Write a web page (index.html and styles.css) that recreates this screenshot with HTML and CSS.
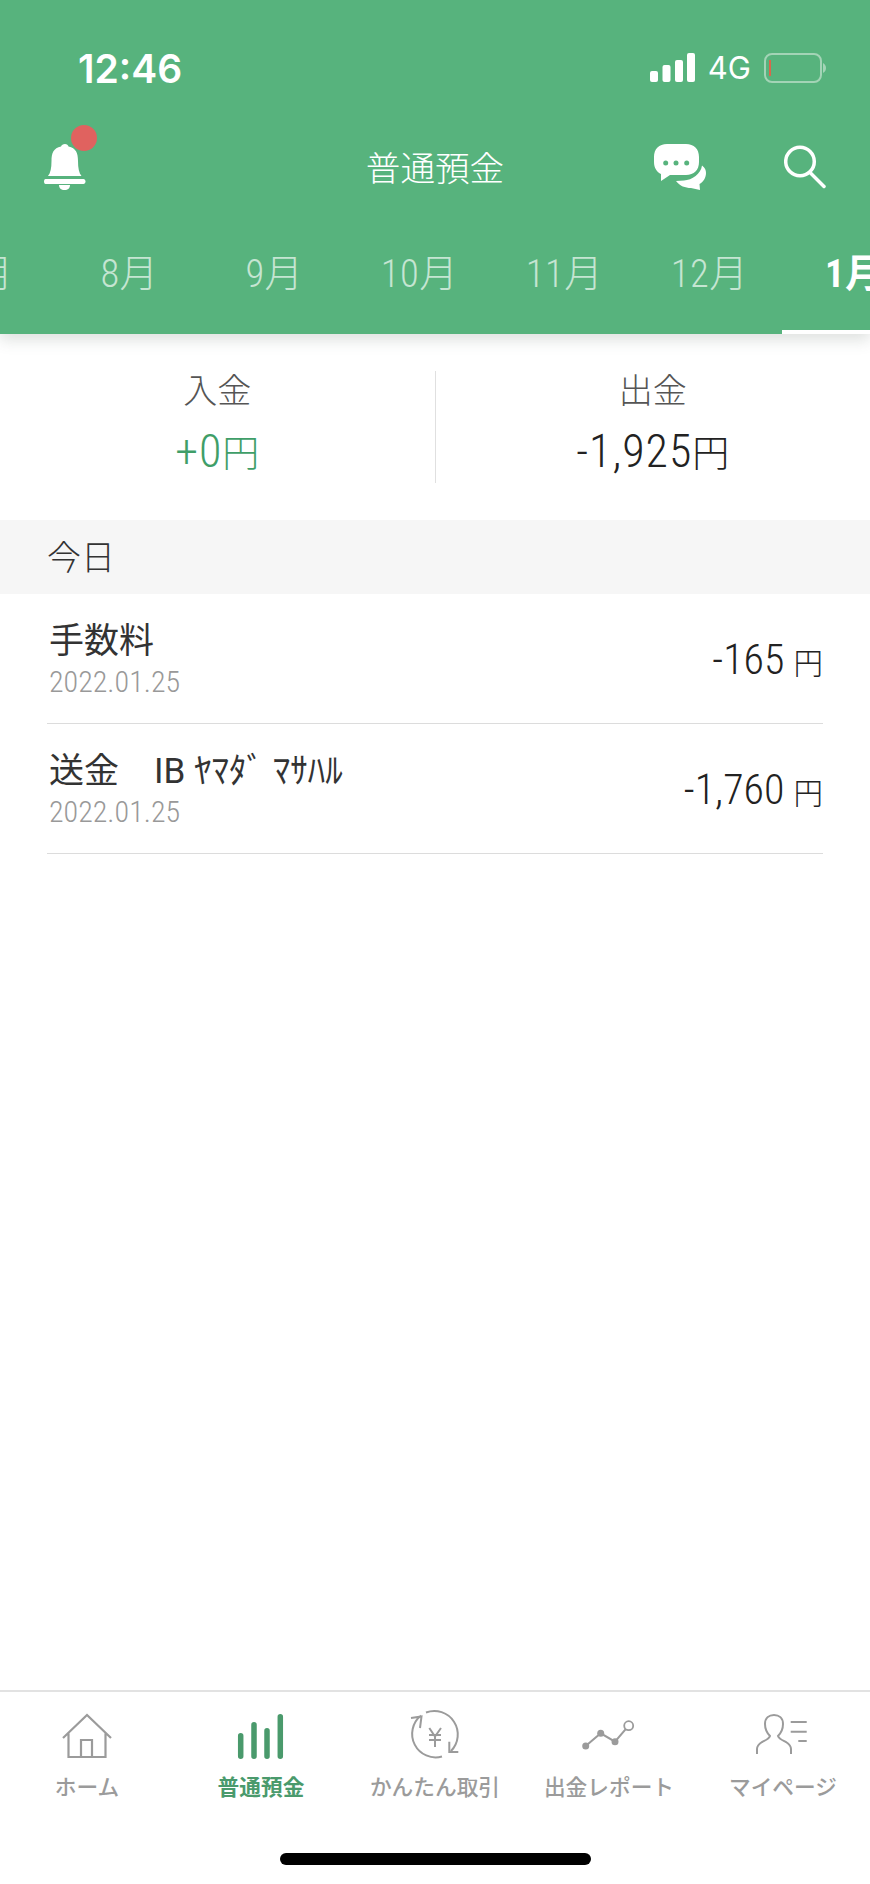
FILE: index.html
```html
<!DOCTYPE html>
<html lang="ja">
<head>
<meta charset="utf-8">
<title>普通預金</title>
<link rel="stylesheet" href="styles.css">
</head>
<body>
<div class="screen">
  <header class="header">
    <div class="status">
      <span class="time">12:46</span>
      <div class="status-right">
        <svg width="45" height="30" viewBox="0 0 45 30"><g fill="#fff"><rect x="0" y="18" width="8" height="11" rx="2"/><rect x="12.500" y="12" width="8" height="17" rx="2"/><rect x="25" y="7" width="8" height="22" rx="2"/><rect x="37" y="0" width="8" height="29" rx="2"/></g></svg>
        <span class="net">4G</span>
        <svg width="63" height="30" viewBox="0 0 63 30"><rect x="1" y="1" width="56" height="28" rx="7" fill="none" stroke="#a3d4b6" stroke-width="2"/><rect x="5" y="7" width="2" height="16" fill="#d8684c"/><path d="M59 10c2 1 3 3 3 5s-1 4-3 5z" fill="#a3d4b6"/></svg>
      </div>
    </div>
    <div class="navbar">
      <div class="bell-wrap">
        <svg width="42" height="47" viewBox="0 0 42 47"><path fill="#fff" d="M21 0c2 0 3 1 3.500 2.500C32 4 34 9 34 17c0 7 1 12 3.500 15H4c2.500-3 3.500-8 3.500-15 0-8 2-13 9.500-14.500C17.500 1 19 0 21 0z"/><path fill="#fff" d="M1.500 35h38c1 0 2 1 2 2.500s-1 2.500-2 2.500h-38C.5 40 0 39 0 37.500S.5 35 1.500 35z"/><path fill="#fff" d="M15 41h11c0 3-2 5-5.500 5S15 44 15 41z"/></svg>
        <span class="dot"></span>
      </div>
      <h1 class="title">普通預金</h1>
      <div class="nav-actions">
        <svg width="52" height="46" viewBox="0 0 52 46"><path fill="#fff" d="M13 0h19c8 0 13 5 13 13v5c0 8-5 13-13 13H16l-9 6 0-7C3 28 0 24 0 18v-5C0 5 5 0 13 0z"/><path fill="#fff" d="M22 37C26 42 31 44 37 44L46 46 45.500 40C49 38 52 34 52 29 52 26 51 24 48 21.500 47 30 38 36 30 36.500Z"/><circle cx="11.700" cy="19" r="2.500" fill="#57b37d"/><circle cx="22" cy="19" r="2.500" fill="#57b37d"/><circle cx="32.700" cy="19" r="2.500" fill="#57b37d"/></svg>
        <svg width="42" height="44" viewBox="0 0 42 44"><circle cx="16" cy="16.500" r="14.300" fill="none" stroke="#fff" stroke-width="3.500"/><path d="M26 27.500 40 41.500" fill="none" stroke="#fff" stroke-width="3.500" stroke-linecap="round"/></svg>
      </div>
    </div>
    <nav class="months">
      <span class="month">7月</span>
      <span class="month">8月</span>
      <span class="month">9月</span>
      <span class="month">10月</span>
      <span class="month">11月</span>
      <span class="month">12月</span>
      <span class="month active">1月</span>
    </nav>
  </header>

  <section class="summary">
    <div class="sum-col">
      <div class="sum-label">入金</div>
      <div class="sum-value plus">+0<span class="yen">円</span></div>
    </div>
    <div class="sum-col">
      <div class="sum-label">出金</div>
      <div class="sum-value">-1,925<span class="yen">円</span></div>
    </div>
  </section>

  <div class="section-head">今日</div>

  <ul class="list">
    <li class="row">
      <div class="row-main">
        <div class="row-title">手数料</div>
        <div class="row-date">2022.01.25</div>
      </div>
      <div class="row-amount">-165<span class="row-yen">円</span></div>
    </li>
    <li class="row">
      <div class="row-main">
        <div class="row-title">送金　IB ﾔﾏﾀﾞ ﾏｻﾊﾙ</div>
        <div class="row-date">2022.01.25</div>
      </div>
      <div class="row-amount">-1,760<span class="row-yen">円</span></div>
    </li>
  </ul>

  <footer class="tabbar">
    <div class="tabs">
      <div class="tab">
        <svg width="50" height="46" viewBox="0 0 50 46"><path d="M1 25 25 2l24 23M6.500 20.500V44h37V20.500M19 44V27h11v17" fill="none" stroke="#9b9b9b" stroke-width="2.200"/></svg>
        <span>ホーム</span>
      </div>
      <div class="tab on">
        <svg width="50" height="46" viewBox="0 0 50 46"><g stroke="#4a9a6c" stroke-width="5.500" stroke-linecap="round"><path d="M4.700 22.750v20.500M18 11.750v31.500M31 17.750v25.500M44.300 3.750v39.500"/></g></svg>
        <span>普通預金</span>
      </div>
      <div class="tab">
        <svg width="50" height="46" viewBox="0 3 50 46"><g fill="none" stroke="#9b9b9b" stroke-width="2"><path d="M32 46.500A23.500 23.500 0 0 1 11 5.500M1 8l10.500-1.500L10 18"/><path d="M16 2.500A23.500 23.500 0 0 1 41 41M39.300 31.700V42h9"/><path d="M19.300 18 25 26.500 31 18M25 26.500V37M19 25h12M19 30h12"/></g></svg>
        <span>かんたん取引</span>
      </div>
      <div class="tab">
        <svg width="56" height="46" viewBox="0 0 56 46"><path d="M4.700 33 19.700 20.300 34 28.700 47.700 12.700" fill="none" stroke="#9b9b9b" stroke-width="2"/><circle cx="4.700" cy="33" r="3.500" fill="#9b9b9b"/><circle cx="19.700" cy="20.300" r="3.500" fill="#9b9b9b"/><circle cx="34" cy="28.700" r="3.500" fill="#9b9b9b"/><circle cx="47.700" cy="12.700" r="4.500" fill="#fff" stroke="#9b9b9b" stroke-width="1.800"/></svg>
        <span>出金レポート</span>
      </div>
      <div class="tab">
        <svg width="54" height="46" viewBox="0 0 54 46"><path d="M1 41v-5c0-3 2-5 5-7 4-2 7-3 8-6-3-3-5-8-5-12 0-6 4-9 9-9s9 3 9 9c0 4-2 9-5 12 1 3 4 4 8 6 3 2 5 4 5 7v5" fill="none" stroke="#9b9b9b" stroke-width="2"/><path d="M34.700 9h16M34.700 18.700h16M42.300 28h8.400" fill="none" stroke="#9b9b9b" stroke-width="2"/></svg>
        <span>マイページ</span>
      </div>
    </div>
    <div class="home-bar"></div>
  </footer>
</div>
</body>
</html>
```

FILE: styles.css
```css
* { box-sizing: border-box; }
html, body { margin: 0; padding: 0; }
body {
  background: #fff;
  font-family: Roboto, "Noto Sans CJK JP", sans-serif;
  overflow: hidden;
}
.screen {
  width: 870px;
  height: 1884px;
  display: flex;
  flex-direction: column;
  overflow: hidden;
  background: #fff;
}
.header {
  height: 334px;
  flex: none;
  background: #57b37d;
  color: #fff;
  box-shadow: 0 6px 14px rgba(70, 90, 80, 0.18);
  position: relative;
  z-index: 1;
}
.status {
  height: 122px;
  padding: 48px 43px 0 78px;
  display: flex;
  justify-content: space-between;
  align-items: flex-start;
}
.time {
  font-family: Inter, sans-serif;
  font-weight: 600;
  font-size: 39px;
  line-height: 42px;
}
.status-right { display: flex; align-items: center; gap: 13px; margin-top: 5px; }
.net { font-family: Inter, sans-serif; font-size: 31px; line-height: 30px; font-weight: 400; }
.navbar {
  height: 90px;
  display: grid;
  grid-template-columns: 1fr auto 1fr;
  align-items: center;
  padding: 0 44px;
}
.bell-wrap { position: relative; width: 42px; height: 47px; }
.dot {
  position: absolute;
  left: 27px;
  top: -19px;
  width: 26px;
  height: 26px;
  border-radius: 50%;
  background: #e0625f;
}
.title {
  margin: 3px 0 0;
  font-size: 34.600px;
  font-weight: 300;
  line-height: 44px;
}
.nav-actions { display: flex; align-items: center; justify-content: flex-end; gap: 78px; }
.months {
  display: flex;
  width: 1015px;
  margin-left: -88px;
}
.month {
  flex: 0 0 145px;
  height: 122px;
  padding-top: 37px;
  text-align: center;
  font-size: 38.500px;
  letter-spacing: 0.5px;
  font-weight: 300;
  line-height: 50px;
  font-stretch: 87%;
  color: #c5e5d2;
  border-bottom: 4px solid transparent;
}
.month.active { color: #fff; font-weight: 700; border-bottom-color: #fff; }

.summary {
  height: 186px;
  flex: none;
  display: flex;
  padding-top: 37px;
}
.sum-col {
  flex: 1;
  height: 112px;
  text-align: center;
}
.sum-col + .sum-col { border-left: 1px solid #e0e0e0; }
.sum-label { font-size: 34px; font-weight: 300; line-height: 40px; color: #555; }
.sum-value { font-size: 46px; letter-spacing: 1px; font-weight: 300; line-height: 60px; color: #222; margin-top: 10px; font-stretch: 87%; }
.sum-value.plus { color: #3f9e68; }
.yen { font-size: 37px; letter-spacing: 0; }

.section-head {
  height: 74px;
  flex: none;
  background: #f6f6f6;
  padding-left: 47px;
  font-size: 34px;
  font-weight: 300;
  line-height: 76px;
  color: #333;
}
.list { list-style: none; margin: 0 47px; padding: 0; flex: 1; }
.row {
  height: 130px;
  display: flex;
  justify-content: space-between;
  align-items: center;
  border-bottom: 1px solid #dcdcdc;
  padding: 0 0 0 2px;
}
.row-main { padding-top: 2px; }
.row-title { font-size: 35px; font-weight: 400; line-height: 44px; color: #333; }
.row-date { font-size: 30px; font-weight: 300; line-height: 36px; color: #999; font-stretch: 87%; }
.row-amount { font-size: 42px; font-weight: 300; color: #222; font-stretch: 87%; padding-top: 2px; }
.row-yen { font-size: 29.500px; margin-left: 9px; }

.tabbar {
  height: 194px;
  flex: none;
  border-top: 2px solid #e2e2e2;
  position: relative;
}
.tabs { display: flex; padding-top: 21px; }
.tab {
  flex: 1;
  display: flex;
  flex-direction: column;
  align-items: center;
  gap: 13px;
  color: #9b9b9b;
  font-size: 21.700px;
  font-weight: 500;
  line-height: 32px;
}
.tab svg { overflow: visible; }
.tab.on { color: #4a9a6c; font-weight: 700; }
.home-bar {
  position: absolute;
  left: 280px;
  top: 161px;
  width: 311px;
  height: 12px;
  border-radius: 6px;
  background: #000;
}
```
